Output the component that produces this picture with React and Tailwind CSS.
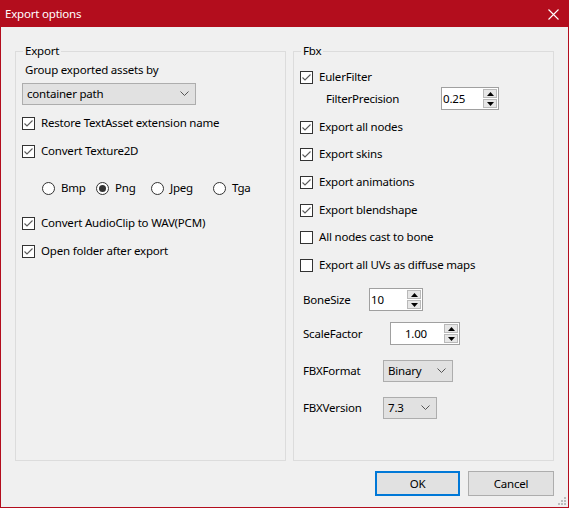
import React from "react";

const font = { fontFamily: '"Noto Sans", "Segoe UI", sans-serif' };

function Check({ checked }) {
  return (
    <span className="w-[13px] h-[13px] border border-[#333333] bg-white flex items-center justify-center shrink-0">
      {checked && (
        <svg width="11" height="11" viewBox="0 0 11 11">
          <path d="M1.5 5.5 L4 8 L9.5 2.5" fill="none" stroke="#5a5a5a" strokeWidth="1.1" />
        </svg>
      )}
    </span>
  );
}

function CheckRow({ checked, label, className = "" }) {
  return (
    <div className={"flex items-center h-4 gap-[6px] " + className}>
      <Check checked={checked} />
      <span className="leading-4">{label}</span>
    </div>
  );
}

function Radio({ checked, label, w }) {
  return (
    <div className={"flex items-center gap-[6px] " + w}>
      <span className="w-[13px] h-[13px] rounded-full border border-[#333333] bg-white flex items-center justify-center">
        {checked && <span className="w-[7px] h-[7px] rounded-full bg-[#333333]" />}
      </span>
      <span className="leading-4">{label}</span>
    </div>
  );
}

function Chevron() {
  return (
    <svg width="9" height="6" viewBox="0 0 9 6">
      <path d="M0.5 0.5 L4.5 4.5 L8.5 0.5" fill="none" stroke="#555" strokeWidth="1" />
    </svg>
  );
}

function Combo({ value, w, className = "" }) {
  return (
    <div className={"h-[22px] bg-[#e1e1e1] border border-[#adadad] flex items-center justify-between pl-[4px] pr-[6px] " + w + " " + className}>
      <span className="leading-4">{value}</span>
      <Chevron />
    </div>
  );
}

function Spin() {
  return (
    <div className="flex flex-col gap-[1px] mr-[1px]">
      <span className="w-[14px] h-[9px] bg-[#e6e6e6] border border-[#b9b9b9] flex items-center justify-center">
        <svg width="7" height="4" viewBox="0 0 7 4"><path d="M0 4 L3.5 0 L7 4 Z" fill="#000" /></svg>
      </span>
      <span className="w-[14px] h-[9px] bg-[#e6e6e6] border border-[#b9b9b9] flex items-center justify-center">
        <svg width="7" height="4" viewBox="0 0 7 4"><path d="M0 0 L3.5 4 L7 0 Z" fill="#000" /></svg>
      </span>
    </div>
  );
}

function Numeric({ value, w, right }) {
  return (
    <div className={"h-[23px] bg-white border border-[#a0a0a0] flex items-center " + w}>
      <span className={"flex-1 leading-4 pl-[1px] " + (right ? "text-right pr-[17px]" : "")}>{value}</span>
      <Spin />
    </div>
  );
}

function Group({ title, w, children }) {
  return (
    <div className={"relative h-[410px] border border-[#dcdcdc] " + w}>
      <span className="absolute -top-[9px] left-[7px] px-[2px] bg-[#f0f0f0] leading-4">{title}</span>
      {children}
    </div>
  );
}

export default function App() {
  return (
    <div className="w-[569px] h-[508px] flex flex-col border border-[#b30d1d] bg-[#f0f0f0] text-[11.5px] tracking-[-0.2px] text-black" style={font}>
      <div className="h-[26px] bg-[#b30d1d] flex items-center justify-between pl-[4px] pr-[9px] text-white shrink-0">
        <span className="leading-4">Export options</span>
        <svg width="11" height="11" viewBox="0 0 11 11">
          <path d="M0.5 0.5 L10.5 10.5 M10.5 0.5 L0.5 10.5" stroke="#fff" strokeWidth="1.1" />
        </svg>
      </div>
      <div className="flex-1 relative flex flex-col pl-[14px]">
        <div className="flex gap-[7px] mt-[24px]">
          <Group title="Export" w="w-[271px]">
            <div className="flex flex-col pl-[6px]">
              <div className="mt-[10px] ml-[3px] leading-4">Group exported assets by</div>
              <Combo value="container path" w="w-[174px]" className="mt-[5px]" />
              <CheckRow checked label="Restore TextAsset extension name" className="mt-[10px]" />
              <CheckRow checked label="Convert Texture2D" className="mt-[12px]" />
              <div className="flex mt-[21px] ml-[20px] h-4">
                <Radio label="Bmp" w="w-[54px]" />
                <Radio checked label="Png" w="w-[55px]" />
                <Radio label="Jpeg" w="w-[62px]" />
                <Radio label="Tga" w="" />
              </div>
              <CheckRow checked label="Convert AudioClip to WAV(PCM)" className="mt-[19px]" />
              <CheckRow checked label="Open folder after export" className="mt-[12px]" />
            </div>
          </Group>
          <Group title="Fbx" w="w-[261px]">
            <div className="flex flex-col pl-[6px]">
              <CheckRow checked label="EulerFilter" className="mt-[17px]" />
              <div className="flex items-center mt-[2px]">
                <span className="w-[141px] pl-[26px] leading-4">FilterPrecision</span>
                <Numeric value="0.25" w="w-[58px]" />
              </div>
              <CheckRow checked label="Export all nodes" className="mt-[9px]" />
              <CheckRow checked label="Export skins" className="mt-[11px]" />
              <CheckRow checked label="Export animations" className="mt-[12px]" />
              <CheckRow checked label="Export blendshape" className="mt-[12px]" />
              <CheckRow label="All nodes cast to bone" className="mt-[11px]" />
              <CheckRow label="Export all UVs as diffuse maps" className="mt-[12px]" />
              <div className="flex items-center mt-[15px]">
                <span className="w-[69px] pl-[3px] leading-4">BoneSize</span>
                <Numeric value="10" w="w-[54px]" />
              </div>
              <div className="flex items-center mt-[11px]">
                <span className="w-[90px] pl-[3px] leading-4">ScaleFactor</span>
                <Numeric value="1.00" w="w-[70px]" right />
              </div>
              <div className="flex items-center mt-[15px]">
                <span className="w-[83px] pl-[3px] leading-4">FBXFormat</span>
                <Combo value="Binary" w="w-[70px]" />
              </div>
              <div className="flex items-center mt-[15px]">
                <span className="w-[83px] pl-[3px] leading-4">FBXVersion</span>
                <Combo value="7.3" w="w-[54px]" />
              </div>
            </div>
          </Group>
        </div>
        <div className="flex justify-end gap-[8px] mt-[10px] pr-[14px]">
          <button className="w-[85px] h-[25px] bg-[#e1e1e1] border-2 border-[#0078d7] leading-4">OK</button>
          <button className="w-[86px] h-[25px] bg-[#e1e1e1] border border-[#adadad] leading-4">Cancel</button>
        </div>
        <svg className="absolute right-[1px] bottom-[1px]" width="10" height="10" viewBox="0 0 10 10">
          <rect x="7" y="1" width="2" height="2" fill="#bcbcbc" />
          <rect x="4" y="4" width="2" height="2" fill="#bcbcbc" />
          <rect x="7" y="4" width="2" height="2" fill="#bcbcbc" />
          <rect x="1" y="7" width="2" height="2" fill="#bcbcbc" />
          <rect x="4" y="7" width="2" height="2" fill="#bcbcbc" />
          <rect x="7" y="7" width="2" height="2" fill="#bcbcbc" />
        </svg>
      </div>
    </div>
  );
}
